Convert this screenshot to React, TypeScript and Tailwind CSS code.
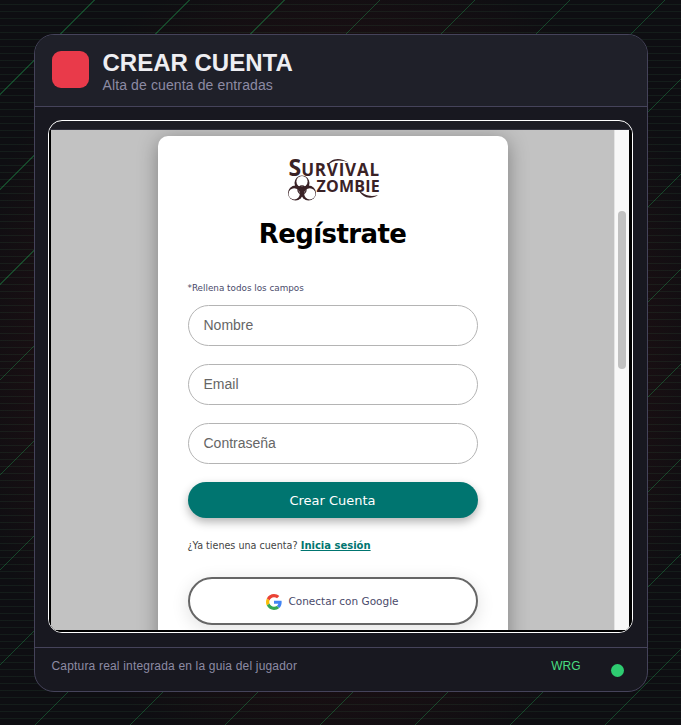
import type { ReactNode } from 'react';

function LogoArt() {
  return (
    <svg viewBox="0 0 94 44" className="absolute inset-0 h-[44px] w-[94px]" fill="#3a2226">
      <path d="M40 9C43 2 52-1 62 6 53 2 46 3 40 9Z" />
      <path d="M71 32C75 41 84 43 91 38 84 40 77 39 71 32Z" />
      <circle cx="15" cy="26" r="7.5" />
      <circle cx="15" cy="24.5" r="5.6" fill="#fff" />
      <circle cx="8.5" cy="36" r="7.5" />
      <circle cx="7.2" cy="36.8" r="5.6" fill="#fff" />
      <circle cx="21.5" cy="36" r="7.5" />
      <circle cx="22.8" cy="36.8" r="5.6" fill="#fff" />
      <circle cx="15" cy="33" r="4" fill="none" stroke="#3a2226" strokeWidth="1.3" />
      <circle cx="15" cy="33" r="1.3" />
    </svg>
  );
}

function Logo() {
  return (
    <div className="relative h-[44px] w-[94px] font-['Open_Sans',sans-serif] font-bold text-[#3a2226]">
      <LogoArt />
      <div className="relative flex items-baseline pl-[2px] pt-[1px]">
        <span className="text-[23px] leading-[19px]">S</span>
        <span className="text-[17px] leading-[19px] tracking-[0.8px]">URVIVAL</span>
      </div>
      <div className="relative pl-[30px] text-[16px] leading-[15px] tracking-[0.2px]">ZOMBIE</div>
    </div>
  );
}

function GoogleIcon() {
  return (
    <svg viewBox="0 0 48 48" className="h-[16px] w-[16px]">
      <path fill="#EA4335" d="M24 9.5c3.54 0 6.71 1.22 9.21 3.6l6.85-6.85C35.9 2.38 30.47 0 24 0 14.62 0 6.51 5.38 2.56 13.22l7.98 6.19C12.43 13.72 17.74 9.5 24 9.5z" />
      <path fill="#4285F4" d="M46.98 24.55c0-1.57-.15-3.09-.38-4.55H24v9.02h12.94c-.58 2.96-2.26 5.48-4.78 7.18l7.73 6c4.51-4.18 7.09-10.36 7.09-17.65z" />
      <path fill="#FBBC05" d="M10.53 28.59c-.48-1.45-.76-2.99-.76-4.59s.27-3.14.76-4.59l-7.98-6.19C.92 16.46 0 20.12 0 24c0 3.88.92 7.54 2.56 10.78l7.97-6.19z" />
      <path fill="#34A853" d="M24 48c6.48 0 11.93-2.13 15.89-5.81l-7.73-6c-2.15 1.45-4.92 2.3-8.16 2.3-6.26 0-11.57-4.22-13.47-9.91l-7.98 6.19C6.51 42.62 14.62 48 24 48z" />
    </svg>
  );
}

function Field({ children }: { children: ReactNode }) {
  return (
    <div className="flex h-[41px] items-center rounded-full border border-[#b4b4b4] bg-white px-[15px] font-['Liberation_Sans',sans-serif] text-[14px] text-[#666666]">
      {children}
    </div>
  );
}

function SignupForm() {
  return (
    <div className="flex flex-1 justify-center overflow-hidden bg-[#c2c2c2] pl-[1px] pt-[6px]">
      <div className="h-[600px] w-[350px] shrink-0 rounded-t-[10px] bg-white px-[30px] pt-[21px] shadow-[0_4px_20px_rgba(0,0,0,0.35)]">
        <div className="flex justify-center pl-[2px]">
          <Logo />
        </div>
        <h1 className="mt-[15px] text-center font-['DejaVu_Sans',sans-serif] text-[26px] font-bold leading-[36px] tracking-[-0.6px] text-black">Regístrate</h1>
        <p className="mt-[29px] font-['DejaVu_Sans',sans-serif] text-[8.8px] leading-[14px] text-[#4a4a6a]">*Rellena todos los campos</p>
        <div className="mt-[10px] flex flex-col gap-[18px]">
          <Field>Nombre</Field>
          <Field>Email</Field>
          <Field>Contraseña</Field>
        </div>
        <div className="mt-[18px] flex h-[36px] items-center justify-center rounded-full bg-[#007570] pt-[1px] font-['DejaVu_Sans',sans-serif] text-[13px] text-white shadow-[0_4px_10px_rgba(0,0,0,0.3)]">
          Crear Cuenta
        </div>
        <p className="mt-[20px] font-['DejaVu_Sans',sans-serif] text-[9.6px] leading-[16px] text-[#444444]">
          ¿Ya tienes una cuenta?{' '}
          <span className="text-[10px] font-bold text-[#007570] underline">Inicia sesión</span>
        </p>
        <div className="mt-[23px] flex h-[48px] items-center justify-center gap-[6px] rounded-[24px] border-2 border-[#666666] bg-white pt-[1px] font-['DejaVu_Sans',sans-serif] text-[10.5px] text-[#4a4a6a] shadow-[0_4px_18px_rgba(0,0,0,0.12)]">
          <GoogleIcon />
          Conectar con Google
        </div>
      </div>
    </div>
  );
}

export default function App() {
  return (
    <div className="flex h-[725px] w-[681px] items-start justify-center overflow-hidden bg-[#0e0e12] bg-[repeating-linear-gradient(135deg,transparent_0,transparent_66.4px,rgba(34,197,94,0.3)_66.4px,rgba(34,197,94,0.3)_67.2px),repeating-linear-gradient(0deg,transparent_0,transparent_6px,rgba(60,120,80,0.14)_6px,rgba(60,120,80,0.14)_7px),radial-gradient(ellipse_at_center,rgba(90,20,20,0.3)_0,rgba(90,20,20,0.2)_55%,transparent_80%)] pt-[34px]">
      <div className="flex h-[658px] w-[614px] flex-col overflow-hidden rounded-[20px] border border-[#45435a] bg-[#181820] font-['Liberation_Sans',sans-serif]">
        <header className="-mx-px -mt-px flex h-[72px] shrink-0 items-center gap-[14px] bg-[#1f2029] pb-[1px] pl-[18px]">
          <div className="h-[37px] w-[37px] rounded-[9px] bg-[#e93a4a]" />
          <div className="pt-[4px]">
            <div className="text-[24px] font-bold leading-[26px] text-[#eeeef2]">CREAR CUENTA</div>
            <div className="mt-[1px] text-[14px] leading-[16px] tracking-[0.12px] text-[#8d8ba4]">Alta de cuenta de entradas</div>
          </div>
        </header>
        <div className="border-t border-[#45435a] pl-[13px] pr-[14px] pt-[13px]">
          <div className="flex h-[513px] flex-col overflow-hidden rounded-[14px] border border-white bg-[#1c1c24]">
            <div className="h-[9px] shrink-0 border-b border-[#30303c]" />
            <div className="flex min-h-0 flex-1 bg-black pl-[2px] pr-[3px]">
              <SignupForm />
              <div className="w-[15px] shrink-0 border-l border-[#e4e4e4] bg-[#f8f8f8] pl-[3px] pt-[81px]">
                <div className="h-[158px] w-[8px] rounded-full bg-[#c1c1c1]" />
              </div>
            </div>
            <div className="h-[2px] shrink-0 bg-black" />
          </div>
        </div>
        <footer className="mt-[14px] flex flex-1 items-center border-t border-[#45435a] pb-[7px] pl-[17px] pr-[23px]">
          <span className="text-[12px] tracking-[0.18px] text-[#8d8ba4]">Captura real integrada en la guia del jugador</span>
          <span className="ml-auto text-[12px] text-[#4ade80]">WRG</span>
          <div className="ml-[30px] mt-[8px] h-[13px] w-[13px] rounded-full bg-[#2ecc71]" />
        </footer>
      </div>
    </div>
  );
}
